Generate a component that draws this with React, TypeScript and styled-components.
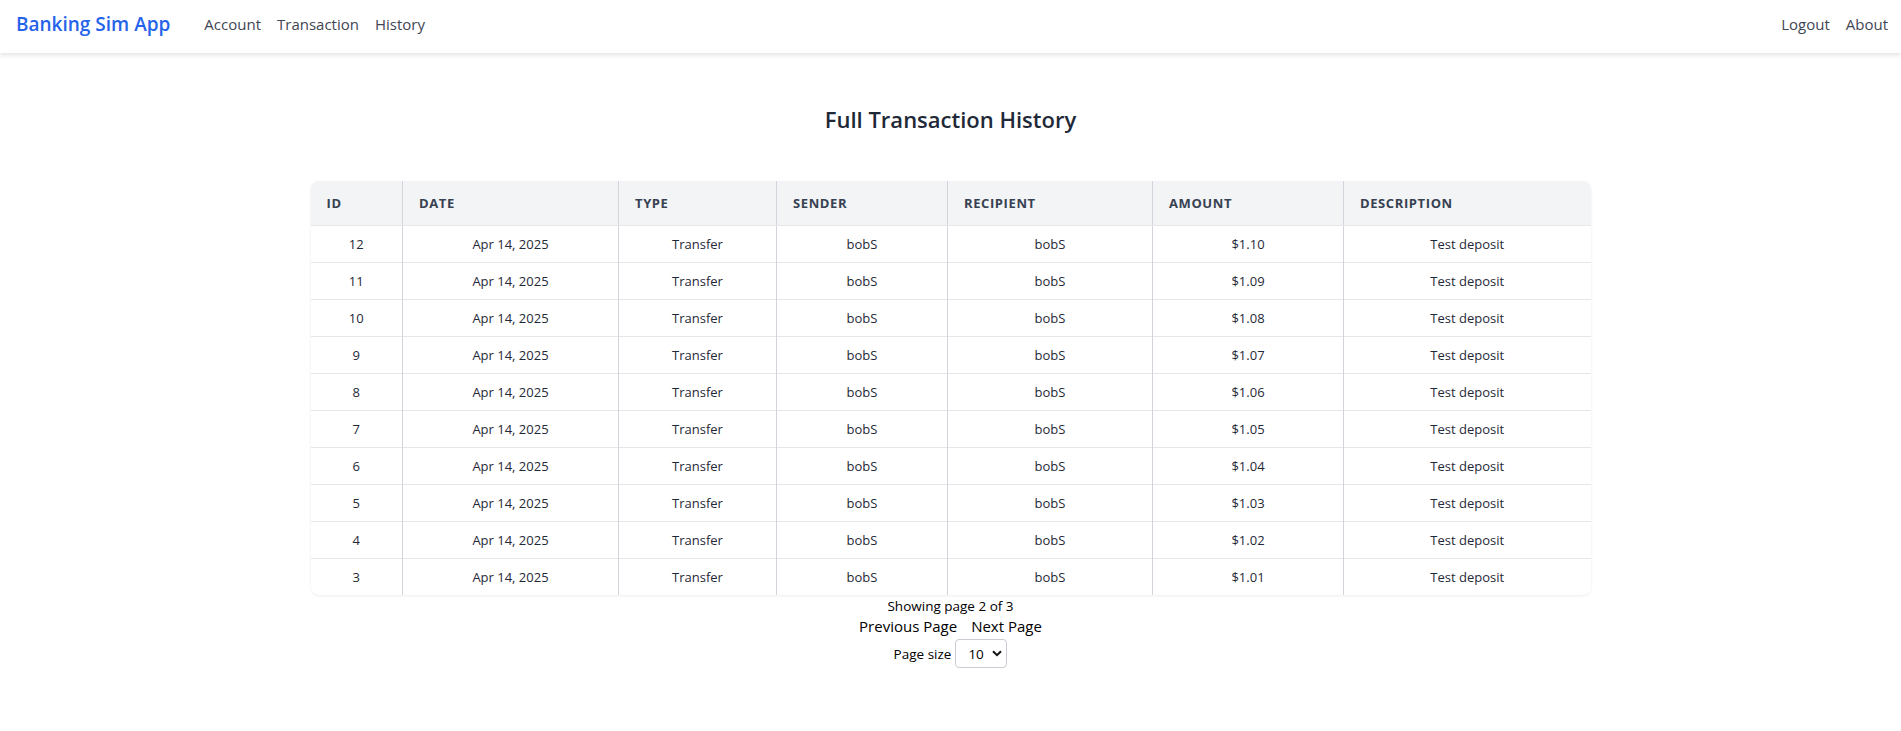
import React from "react";
import styled, { createGlobalStyle } from "styled-components";

const Global = createGlobalStyle`
  html, body { margin: 0; padding: 0; background: #fff; }
  body { font-family: "Segoe UI", "Open Sans", "Noto Sans", sans-serif; color: #212529; }
  * { box-sizing: border-box; }
`;

const Nav = styled.nav`
  height: 53px;
  display: flex;
  align-items: center;
  justify-content: space-between;
  padding: 0 5px 6px 16px;
  background: #fff;
  box-shadow: 0 2px 5px rgba(0, 0, 0, 0.12);
`;

const NavLeft = styled.div`
  display: flex;
  align-items: center;
`;

const Brand = styled.a`
  font-size: 19px;
  font-weight: 600;
  color: #2563eb;
  text-decoration: none;
  margin-right: 26px;
`;

const NavLink = styled.a`
  font-size: 15px;
  color: #3f4654;
  text-decoration: none;
  padding: 0 8px;
`;

const NavRight = styled.div`
  display: flex;
  align-items: center;
`;

const Main = styled.main`
  display: flex;
  flex-direction: column;
  align-items: center;
`;

const Title = styled.h2`
  margin: 52px 0 0;
  font-size: 22px;
  font-weight: 600;
  color: #1f2937;
  line-height: 28px;
`;

const TableCard = styled.div`
  margin-top: 48px;
  width: 1280px;
  border-radius: 8px;
  overflow: hidden;
  box-shadow: 0 1px 3px rgba(0, 0, 0, 0.08);
  background: #fff;
`;

const Table = styled.table`
  width: 100%;
  border-collapse: collapse;
  table-layout: fixed;
`;

const Th = styled.th`
  background: #f3f4f6;
  color: #374151;
  font-size: 13px;
  font-weight: 700;
  text-transform: uppercase;
  letter-spacing: 0.6px;
  text-align: left;
  padding: 0 16px;
  height: 44px;
  border-bottom: 1px solid #e5e7eb;
  border-left: 1px solid #d1d5db;
  &:first-child { border-left: none; }
`;

const Td = styled.td`
  font-size: 13px;
  color: #1f2937;
  text-align: center;
  height: 37px;
  padding: 0 16px;
  border-top: 1px solid #e5e7eb;
  border-left: 1px solid #d1d5db;
  &:first-child { border-left: none; }
`;

const Tr = styled.tr`
  &:first-child td { border-top: none; }
`;

const Pager = styled.div`
  display: flex;
  flex-direction: column;
  align-items: center;
  margin-top: 2px;
`;

const Status = styled.div`
  font-size: 13.5px;
  line-height: 19px;
  color: #000;
`;

const PagerButtons = styled.div`
  display: flex;
  gap: 14px;
  line-height: 22px;
`;

const PagerButton = styled.button`
  font-family: inherit;
  font-size: 15px;
  background: none;
  border: none;
  padding: 0;
  color: #000;
  cursor: pointer;
`;

const SizeRow = styled.div`
  display: flex;
  align-items: center;
  gap: 4px;
  margin-top: 3px;
  font-size: 13.5px;
  color: #000;
`;

const SelectWrap = styled.div`
  position: relative;
  width: 52px;
  height: 29px;
`;

const Select = styled.select`
  appearance: none;
  width: 100%;
  height: 100%;
  border: 1px solid #c9ccd3;
  border-radius: 4px;
  background: #fff;
  font-family: inherit;
  font-size: 13.5px;
  padding: 0 0 0 12px;
  color: #000;
`;

const Chevron = styled.svg`
  position: absolute;
  right: 5px;
  top: 11px;
  pointer-events: none;
`;

const columns = [
  { label: "ID", width: 92 },
  { label: "Date", width: 216 },
  { label: "Type", width: 158 },
  { label: "Sender", width: 171 },
  { label: "Recipient", width: 205 },
  { label: "Amount", width: 191 },
  { label: "Description", width: 247 },
];

const rows = [12, 11, 10, 9, 8, 7, 6, 5, 4, 3].map((id) => ({
  id,
  date: "Apr 14, 2025",
  type: "Transfer",
  sender: "bobS",
  recipient: "bobS",
  amount: `$${(1 + (id - 2) / 100).toFixed(2)}`,
  description: "Test deposit",
}));

export default function App() {
  return (
    <>
      <Global />
      <Nav>
        <NavLeft>
          <Brand href="#">Banking Sim App</Brand>
          <NavLink href="#">Account</NavLink>
          <NavLink href="#">Transaction</NavLink>
          <NavLink href="#">History</NavLink>
        </NavLeft>
        <NavRight>
          <NavLink href="#">Logout</NavLink>
          <NavLink href="#">About</NavLink>
        </NavRight>
      </Nav>
      <Main>
        <Title>Full Transaction History</Title>
        <TableCard>
          <Table>
            <colgroup>
              {columns.map((c) => (
                <col key={c.label} style={{ width: c.width }} />
              ))}
            </colgroup>
            <thead>
              <tr>
                {columns.map((c) => (
                  <Th key={c.label}>{c.label}</Th>
                ))}
              </tr>
            </thead>
            <tbody>
              {rows.map((r) => (
                <Tr key={r.id}>
                  <Td>{r.id}</Td>
                  <Td>{r.date}</Td>
                  <Td>{r.type}</Td>
                  <Td>{r.sender}</Td>
                  <Td>{r.recipient}</Td>
                  <Td>{r.amount}</Td>
                  <Td>{r.description}</Td>
                </Tr>
              ))}
            </tbody>
          </Table>
        </TableCard>
        <Pager>
          <Status>Showing page 2 of 3</Status>
          <PagerButtons>
            <PagerButton>Previous Page</PagerButton>
            <PagerButton>Next Page</PagerButton>
          </PagerButtons>
          <SizeRow>
            <span>Page size</span>
            <SelectWrap>
              <Select defaultValue="10">
                <option value="5">5</option>
                <option value="10">10</option>
                <option value="20">20</option>
              </Select>
              <Chevron width="10" height="7" viewBox="0 0 10 7">
                <path d="M1 1.2 L5 5.2 L9 1.2" fill="none" stroke="#111" strokeWidth="2" />
              </Chevron>
            </SelectWrap>
          </SizeRow>
        </Pager>
      </Main>
    </>
  );
}
